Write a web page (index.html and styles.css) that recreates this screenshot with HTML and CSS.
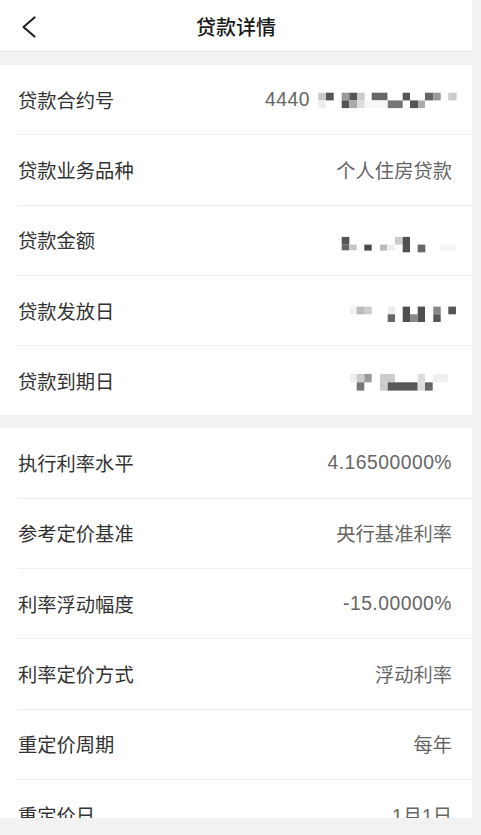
FILE: index.html
```html
<!DOCTYPE html>
<html lang="zh-CN">
<head>
<meta charset="utf-8">
<title>贷款详情</title>
<link rel="stylesheet" href="styles.css">
</head>
<body>
<div class="page">
  <header class="nav">
    <div class="nav-left">
      <svg class="back" width="16" height="22" viewBox="0 0 16 22"><polyline points="13.5,1.5 2.5,11 13.5,20.5" fill="none" stroke="#222" stroke-width="2.2" stroke-linecap="round" stroke-linejoin="round"/></svg>
    </div>
    <div class="nav-title">贷款详情</div>
    <div class="nav-right"></div>
  </header>

  <section class="card">
    <div class="row">
      <span class="label">贷款合约号</span>
      <span class="value">
        <span class="num">4440</span>
        <svg class="mosaic" width="143" height="30" viewBox="314 84.6 143 30">
          <rect x="318.3" y="92.3" width="7.7" height="7.7" fill="#c8c8c8"/>
          <rect x="326" y="92.3" width="7.7" height="7.7" fill="#555"/>
          <rect x="318.3" y="100" width="7.7" height="7.7" fill="#eee"/>
          <rect x="341.7" y="92.3" width="7.6" height="7.7" fill="#999"/>
          <rect x="349.3" y="92.3" width="7.7" height="7.7" fill="#555"/>
          <rect x="357" y="92.3" width="7.7" height="7.7" fill="#ccc"/>
          <rect x="341.7" y="100" width="7.6" height="7.7" fill="#555"/>
          <rect x="349.3" y="100" width="7.7" height="7.7" fill="#aaa"/>
          <rect x="357" y="100" width="7.7" height="7.7" fill="#ddd"/>
          <rect x="371.7" y="92.3" width="15.7" height="7.7" fill="#666"/>
          <rect x="387.3" y="100" width="15.4" height="7.7" fill="#777"/>
          <rect x="402.7" y="92.3" width="7.3" height="7.7" fill="#555"/>
          <rect x="410" y="100" width="8.3" height="7.7" fill="#555"/>
          <rect x="418.3" y="100" width="6.7" height="7.7" fill="#aaa"/>
          <rect x="425" y="92.3" width="8.3" height="7.7" fill="#666"/>
          <rect x="433.3" y="92.3" width="7.4" height="7.7" fill="#999"/>
          <rect x="448.3" y="92.3" width="8.3" height="7.7" fill="#ccc"/>
          <rect x="364.7" y="100" width="23" height="7.7" fill="#f6f6f6"/>
        </svg>
      </span>
    </div>
    <div class="row">
      <span class="label">贷款业务品种</span>
      <span class="value">个人住房贷款</span>
    </div>
    <div class="row">
      <span class="label">贷款金额</span>
      <span class="value">
        <svg class="mosaic" width="119" height="30" viewBox="338 225.4 119 30">
          <rect x="341.7" y="237.3" width="7.6" height="7.7" fill="#555"/>
          <rect x="341.7" y="245" width="7.6" height="5.7" fill="#666"/>
          <rect x="349.3" y="245" width="7.4" height="5.7" fill="#c8c8c8"/>
          <rect x="364.3" y="245" width="7.4" height="6" fill="#4a4a4a"/>
          <rect x="380" y="245" width="7.3" height="6" fill="#bbb"/>
          <rect x="387.3" y="245" width="7.7" height="6" fill="#eee"/>
          <rect x="395" y="237.3" width="7.7" height="7.7" fill="#ccc"/>
          <rect x="402.7" y="237.3" width="7.3" height="15.4" fill="#505050"/>
          <rect x="417.7" y="245" width="7.6" height="7.7" fill="#666"/>
          <rect x="440" y="245" width="16" height="6" fill="#f5f5f5"/>
        </svg>
      </span>
    </div>
    <div class="row">
      <span class="label">贷款发放日</span>
      <span class="value">
        <svg class="mosaic" width="107" height="30" viewBox="350 295.7 107 30">
          <rect x="350" y="306.3" width="6.7" height="7.7" fill="#f0f0f0"/>
          <rect x="356.7" y="306.3" width="7.3" height="7.7" fill="#bbb"/>
          <rect x="364" y="306.3" width="7.7" height="7.7" fill="#ccc"/>
          <rect x="387.7" y="306.3" width="7.3" height="7.7" fill="#eee"/>
          <rect x="387.7" y="314" width="7.3" height="7.7" fill="#666"/>
          <rect x="402.7" y="306.3" width="7.3" height="15.4" fill="#505050"/>
          <rect x="410" y="314" width="7.7" height="7.7" fill="#888"/>
          <rect x="417.7" y="306.3" width="7.3" height="15.4" fill="#505050"/>
          <rect x="433.3" y="306.3" width="7.4" height="7.7" fill="#888"/>
          <rect x="433.3" y="314" width="7.4" height="7.7" fill="#555"/>
          <rect x="448.3" y="306.3" width="7.7" height="7.7" fill="#555"/>
        </svg>
      </span>
    </div>
    <div class="row">
      <span class="label">贷款到期日</span>
      <span class="value">
        <svg class="mosaic" width="107" height="30" viewBox="350 365.4 107 30">
          <rect x="350" y="373.3" width="6.7" height="8.4" fill="#eee"/>
          <rect x="356.7" y="373.3" width="7.6" height="8.4" fill="#ccc"/>
          <rect x="364.3" y="373.3" width="7.4" height="8.4" fill="#999"/>
          <rect x="356.7" y="381.7" width="7.6" height="8.3" fill="#777"/>
          <rect x="380" y="373.3" width="15" height="8.4" fill="#ccc"/>
          <rect x="380" y="381.7" width="7.7" height="8.3" fill="#ccc"/>
          <rect x="387.7" y="381.7" width="30" height="8.3" fill="#585858"/>
          <rect x="417.7" y="373.3" width="7.3" height="8.4" fill="#ddd"/>
          <rect x="417.7" y="381.7" width="7.3" height="8.3" fill="#ddd"/>
          <rect x="425" y="381.7" width="7.7" height="8.3" fill="#666"/>
          <rect x="433.3" y="373.3" width="14.7" height="8.4" fill="#f0f0f0"/>
        </svg>
      </span>
    </div>
  </section>

  <section class="card">
    <div class="row">
      <span class="label">执行利率水平</span>
      <span class="value num">4.16500000%</span>
    </div>
    <div class="row">
      <span class="label">参考定价基准</span>
      <span class="value">央行基准利率</span>
    </div>
    <div class="row">
      <span class="label">利率浮动幅度</span>
      <span class="value num">-15.00000%</span>
    </div>
    <div class="row">
      <span class="label">利率定价方式</span>
      <span class="value">浮动利率</span>
    </div>
    <div class="row">
      <span class="label">重定价周期</span>
      <span class="value">每年</span>
    </div>
    <div class="row">
      <span class="label">重定价日</span>
      <span class="value">1月1日</span>
    </div>
  </section>
</div>
<div class="bottom-strip"></div>
</body>
</html>
```

FILE: styles.css
```css
html, body {
  margin: 0;
  padding: 0;
}

body {
  background: #f2f2f2;
  font-family: "Liberation Sans", "Noto Sans CJK SC", sans-serif;
  overflow: hidden;
}

.page {
  width: 472px;
}

.nav {
  height: 51px;
  background: #fff;
  border-bottom: 1px solid #e6e6e6;
  display: grid;
  grid-template-columns: 1fr auto 1fr;
  align-items: center;
}

.nav-left {
  padding-left: 21px;
  display: flex;
  align-items: center;
  padding-top: 3px;
}

.back {
  display: block;
}

.nav-title {
  font-size: 20px;
  font-weight: 500;
  color: #1a1a1a;
  padding-top: 1px;
}

.card {
  background: #fff;
  margin-top: 13px;
}

.row {
  margin-left: 18px;
  padding-right: 20px;
  height: 69.3px;
  display: flex;
  align-items: center;
  justify-content: space-between;
  border-bottom: 1px solid #efefef;
}

.row:last-child {
  border-bottom: none;
}

.label {
  font-size: 19.3px;
  color: #333;
}

.value {
  font-size: 19.3px;
  color: #666;
  display: flex;
  align-items: center;
  gap: 4px;
}

.num {
  letter-spacing: 0.5px;
}

.mosaic {
  display: block;
  margin-right: -5px;
}

.bottom-strip {
  position: fixed;
  left: 0;
  right: 0;
  bottom: 0;
  height: 17px;
  background: #f2f2f2;
}
```
